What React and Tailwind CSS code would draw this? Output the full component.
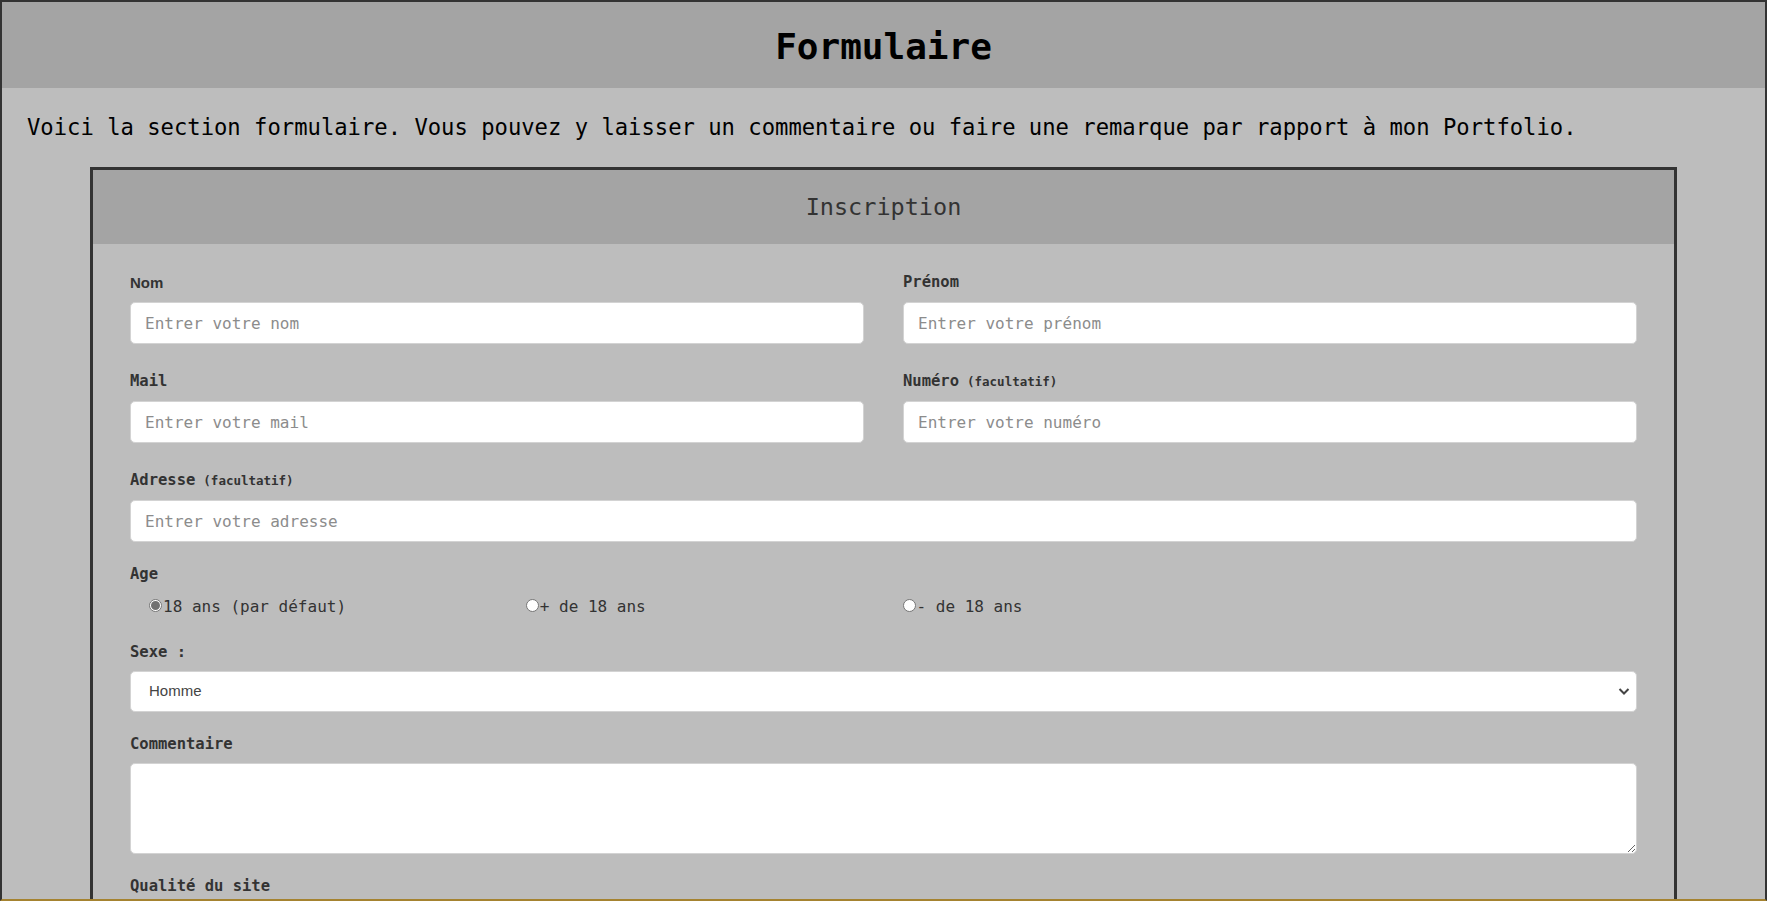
import { useState } from 'react';

function Label({ children, extra, sans }) {
  return (
    <label
      className={
        sans
          ? "block h-[19px] leading-[19px] text-[15px] font-bold text-[#333] font-['Liberation_Sans',Arial,sans-serif]"
          : 'block h-[19px] leading-[19px] text-[15.5px] font-bold text-[#333]'
      }
    >
      {children}
      {extra && <span className="ml-[8px] text-[12.5px] font-bold">{extra}</span>}
    </label>
  );
}

function TextInput({ placeholder }) {
  return (
    <input
      type="text"
      placeholder={placeholder}
      className="mt-[10px] block w-full h-[42px] rounded-[5px] border border-[#d3d3d3] bg-white px-[14px] text-[16px] text-[#333] placeholder:text-[#8c8c8c] outline-none"
    />
  );
}

function Radio({ checked, label, onClick }) {
  return (
    <button type="button" onClick={onClick} className="flex items-center pl-[19px] text-[16px] text-[#333]">
      <span className="flex h-[13px] w-[13px] items-center justify-center rounded-full border border-[#767676] bg-white">
        {checked && <span className="h-[9px] w-[9px] rounded-full bg-[#707070]" />}
      </span>
      <span className="ml-[1px] mt-[2px] leading-[19px]">{label}</span>
    </button>
  );
}

export default function App() {
  const [age, setAge] = useState(0);
  const ages = ['18 ans (par défaut)', '+ de 18 ans', '- de 18 ans'];

  return (
    <div className="h-[901px] overflow-hidden border-2 border-[#333] border-b-[#a58330] bg-[#bdbdbd] font-['DejaVu_Sans_Mono','Liberation_Mono',monospace]">
      <header className="flex h-[86px] items-center justify-center bg-[#a4a4a4] pt-[4px]">
        <h1 className="text-[36px] font-bold text-black">Formulaire</h1>
      </header>

      <p className="mt-[26px] pl-[25px] text-[22.2px] leading-[26px] text-black">
        Voici la section formulaire. Vous pouvez y laisser un commentaire ou faire une remarque par rapport à mon Portfolio.
      </p>

      <div className="mx-[88px] mt-[27px] border-[3px] border-[#333]">
        <div className="flex h-[74px] items-center justify-center bg-[#a4a4a4] pt-[2px] text-[23.5px] text-[#333]">
          Inscription
        </div>

        <form className="px-[37px] pt-[29px] pb-[80px]">
          <div className="grid grid-cols-2 gap-x-[39px] gap-y-[28px]">
            <div>
              <Label sans>Nom</Label>
              <TextInput placeholder="Entrer votre nom" />
            </div>
            <div>
              <Label>Prénom</Label>
              <TextInput placeholder="Entrer votre prénom" />
            </div>
            <div>
              <Label>Mail</Label>
              <TextInput placeholder="Entrer votre mail" />
            </div>
            <div>
              <Label extra="(facultatif)">Numéro</Label>
              <TextInput placeholder="Entrer votre numéro" />
            </div>
            <div className="col-span-2">
              <Label extra="(facultatif)">Adresse</Label>
              <TextInput placeholder="Entrer votre adresse" />
            </div>
          </div>

          <div className="mt-[23px]">
            <Label>Age</Label>
            <div className="mt-[11px] grid grid-cols-4">
              {ages.map((a, i) => (
                <Radio key={a} label={a} checked={age === i} onClick={() => setAge(i)} />
              ))}
            </div>
          </div>

          <div className="mt-[27px]">
            <Label>Sexe :</Label>
            <div className="relative mt-[9px]">
              <select className="block h-[41px] w-full appearance-none rounded-[5px] border border-[#d3d3d3] bg-white pl-[18px] font-['Liberation_Sans',Arial,sans-serif] text-[15px] text-[#444] outline-none">
                <option>Homme</option>
                <option>Femme</option>
                <option>Autre</option>
              </select>
              <svg className="pointer-events-none absolute right-[7px] top-[16px]" width="12" height="9" viewBox="0 0 12 9">
                <path d="M1.5 2 L6 6.5 L10.5 2" fill="none" stroke="#444" strokeWidth="2" />
              </svg>
            </div>
          </div>

          <div className="mt-[23px]">
            <Label>Commentaire</Label>
            <textarea className="mt-[9px] block h-[91px] w-full rounded-[5px] border border-[#d3d3d3] bg-white px-[14px] py-[8px] text-[16px] outline-none" />
          </div>

          <div className="mt-[23px]">
            <Label>Qualité du site</Label>
          </div>
        </form>
      </div>
    </div>
  );
}
